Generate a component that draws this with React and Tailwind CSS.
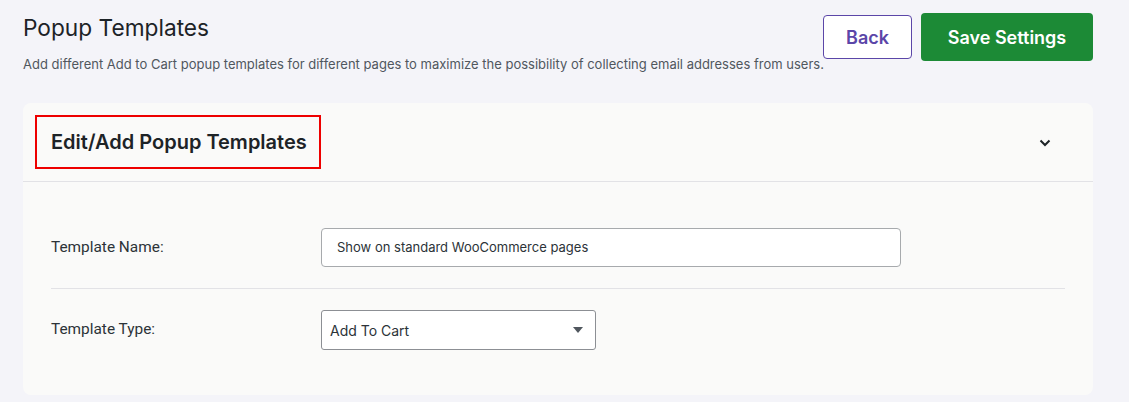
import React from "react";

export default function App() {
  return (
    <div className="min-h-[402px] w-full bg-[#f4f4f9] px-[23px] pt-[13px] pb-[8px]" style={{ fontFamily: "Inter, 'Noto Sans', sans-serif" }}>
      <div className="flex items-start justify-between pr-[13px]">
        <div className="flex min-w-0 flex-col">
          <h1 className="mt-[1px] text-[22.7px] leading-[28px] font-normal text-[#1d2327]">Popup Templates</h1>
          <p className="mt-[14px] whitespace-nowrap text-[13px] leading-[16px] text-[#50575e]">
            Add different Add to Cart popup templates for different pages to maximize the possibility of collecting email addresses from users.
          </p>
        </div>
        <div className="flex shrink-0 items-center gap-[9px]">
          <button className="h-[44px] w-[89px] rounded-[4px] border border-[#5b46a8] bg-white text-[18px] font-semibold text-[#5b46a8]">
            Back
          </button>
          <button className="h-[48px] w-[172px] rounded-[4px] bg-[#1c8a36] text-[18px] font-semibold text-white">
            Save Settings
          </button>
        </div>
      </div>

      <div className="mt-[31px] w-[1070px] rounded-[8px] bg-[#fafaf9]">
        <div className="flex h-[79px] items-center justify-between border-b border-[#e2e2e6] pl-[12px] pr-[42px]">
          <div className="flex h-[54px] w-[286px] items-center border-2 border-[#ee0000] pl-[14px]">
            <span className="text-[20px] font-semibold text-[#1d2327]">Edit/Add Popup Templates</span>
          </div>
          <svg width="12" height="8" viewBox="0 0 12 8" fill="none" className="mt-[1px]">
            <path d="M1.5 1.5 L6 6 L10.5 1.5" stroke="#1d2327" strokeWidth="2" />
          </svg>
        </div>
        <div className="px-[28px] pt-[46px] pb-[45px]">
          <div className="flex items-center border-b border-[#e2e2e6] pb-[21px]">
            <label className="w-[270px] text-[15.4px] text-[#2c3338]" style={{ fontFamily: "Roboto, sans-serif" }}>
              Template Name:
            </label>
            <div className="flex h-[39px] w-[580px] items-center rounded-[4px] border border-[#a7aaad] bg-white pl-[15px] text-[13px] text-[#2c3338]">
              Show on standard WooCommerce pages
            </div>
          </div>
          <div className="flex items-center pt-[21px]">
            <label className="w-[270px] text-[15.4px] text-[#2c3338]" style={{ fontFamily: "Roboto, sans-serif" }}>
              Template Type:
            </label>
            <div className="flex h-[40px] w-[275px] items-center justify-between rounded-[3px] border border-[#8c8f94] bg-white pl-[8px] pr-[12px] text-[14px] text-[#2c3338]">
              <span>Add To Cart</span>
              <svg width="10" height="6" viewBox="0 0 10 6">
                <path d="M0 0 L10 0 L5 6 Z" fill="#50575e" />
              </svg>
            </div>
          </div>
        </div>
      </div>
    </div>
  );
}
